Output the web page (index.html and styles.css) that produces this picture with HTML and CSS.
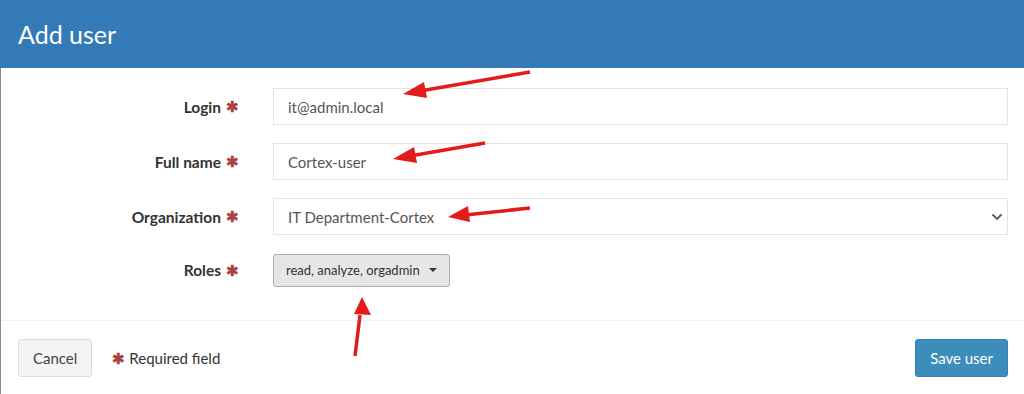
FILE: index.html
```html
<!DOCTYPE html>
<html>
<head>
<meta charset="utf-8">
<link rel="stylesheet" href="styles.css">
</head>
<body>
<div class="modal">
  <div class="modal-header"><h1 class="title">Add user</h1></div>
  <form class="modal-body">
    <div class="row">
      <label class="label">Login <span class="req">✱</span></label>
      <div class="control"><div class="input">it@admin.local</div></div>
    </div>
    <div class="row">
      <label class="label">Full name <span class="req">✱</span></label>
      <div class="control"><div class="input">Cortex-user</div></div>
    </div>
    <div class="row">
      <label class="label">Organization <span class="req">✱</span></label>
      <div class="control"><div class="input select">IT Department-Cortex
        <svg class="chev" width="12" height="8" viewBox="0 0 12 8"><path d="M1.5 1.5 L6 6 L10.5 1.5" fill="none" stroke="#555" stroke-width="1.8"/></svg></div></div>
    </div>
    <div class="row roles-row">
      <label class="label">Roles <span class="req">✱</span></label>
      <div class="control"><button type="button" class="roles">read, analyze, orgadmin <span class="caret"></span></button></div>
    </div>
  </form>
  <div class="modal-footer">
    <button type="button" class="btn cancel">Cancel</button>
    <span class="hint"><span class="req">✱</span> Required field</span>
    <span class="spacer"></span>
    <button type="button" class="btn save">Save user</button>
  </div>
  <svg class="arrows" width="1024" height="394" viewBox="0 0 1024 394">
    <g stroke="#e31b1b" stroke-width="3.5" fill="#e31b1b">
      <line x1="530" y1="72" x2="420" y2="91"/>
      <polygon points="403,94 424,82 427,98" stroke="none"/>
      <line x1="485" y1="143" x2="410" y2="156"/>
      <polygon points="393,159 414,147 417,163" stroke="none"/>
      <line x1="530" y1="208" x2="465" y2="215"/>
      <polygon points="448,217 468,206 470,222" stroke="none"/>
      <line x1="355" y1="356" x2="360" y2="315"/>
      <polygon points="362,297 371,315 354,314" stroke="none"/>
    </g>
  </svg>
</div>
</body>
</html>
```
FILE: styles.css
```css
* { box-sizing: border-box; }
html, body { margin: 0; padding: 0; background: #fff; }
body { font-family: "Lato", "Open Sans", sans-serif; color: #333; width: 1024px; height: 394px; overflow: hidden; }
.modal { position: relative; width: 1024px; height: 394px; border-left: 1px solid #8a8a8a; }
.modal-header { background: #337ab7; height: 68px; padding: 0 18px; display: flex; align-items: center; margin-left: -1px; }
.title { margin: 0; font-weight: 400; font-size: 25px; color: #fff; letter-spacing: 0; }
.modal-body { padding: 20px 16px 0 0; height: 253px; border-bottom: 1px solid #f0f0f0; }
.row { display: flex; align-items: center; margin-bottom: 18px; height: 37px; }
.label { width: 238px; text-align: right; font-weight: 700; font-size: 15.5px; color: #333; display: flex; justify-content: flex-end; align-items: center; gap: 5px; }
.req { color: #a94442; font-size: 15px; font-weight: 700; line-height: 1; }
.control { flex: 1; margin-left: 34px; }
.input { height: 37px; border: 1px solid #e4e4e4; padding: 0 14px; font-size: 15px; color: #555; display: flex; align-items: center; }
.select { justify-content: space-between; padding-right: 4px; }
.roles-row { height: 34px; }
.roles { font-family: inherit; height: 33px; padding: 0 12px; background: #e6e6e6; border: 1px solid #adadad; border-radius: 3px; font-size: 13px; color: #333; display: inline-flex; align-items: center; gap: 7px; }
.caret { width: 0; height: 0; border-left: 4px solid transparent; border-right: 4px solid transparent; border-top: 4px solid #333; margin-left: 2px; }
.modal-footer { display: flex; align-items: center; padding: 18px 16px 0 17px; }
.btn { font-family: inherit; font-size: 15px; height: 38px; border-radius: 3px; padding: 0 14px; }
.cancel { background: #f4f4f4; border: 1px solid #ddd; color: #444; }
.hint { margin-left: 20px; font-size: 15px; color: #333; display: inline-flex; align-items: center; gap: 4px; }
.hint .req { font-size: 15px; }
.spacer { flex: 1; }
.save { background: #3c8dbc; border: 1px solid #367fa9; color: #fff; padding: 0 14px; }
.arrows { position: absolute; left: -1px; top: 0; pointer-events: none; }
```
